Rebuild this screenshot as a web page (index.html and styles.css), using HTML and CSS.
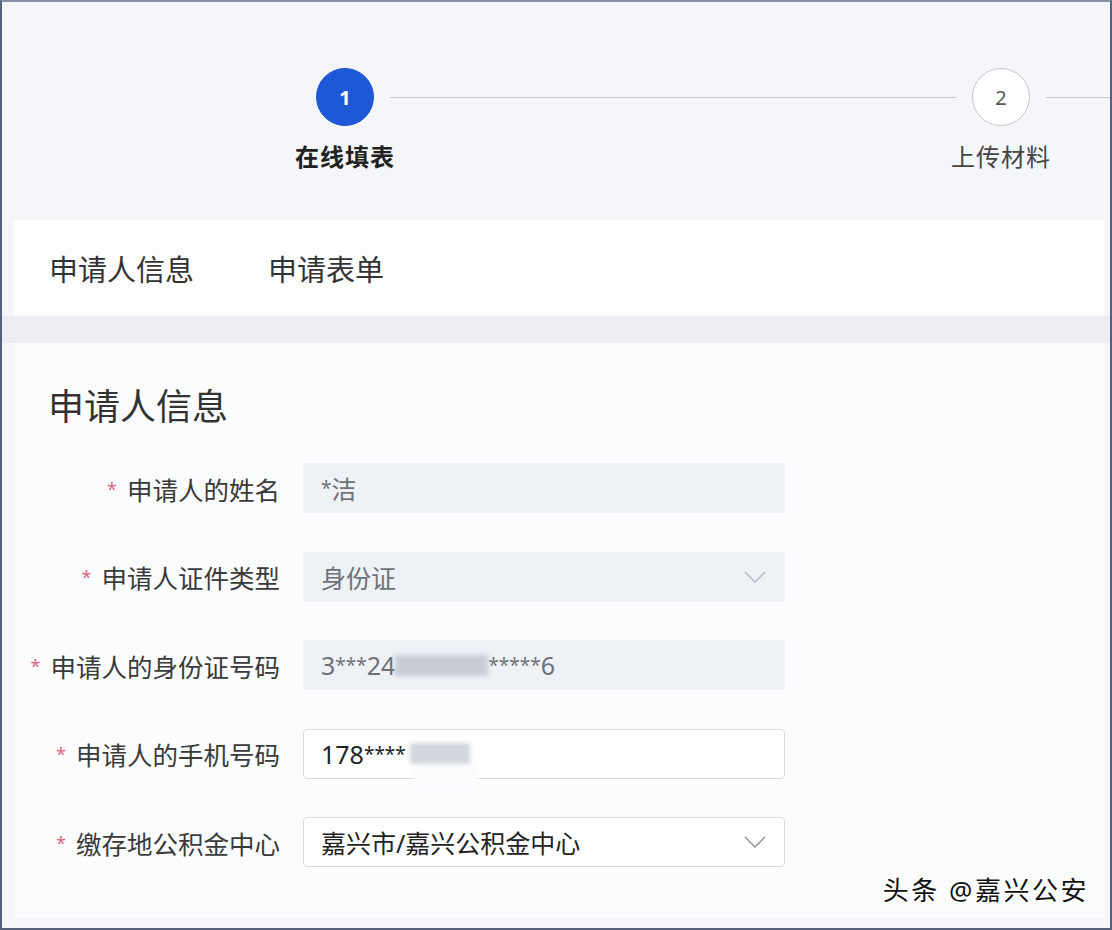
FILE: index.html
```html
<!DOCTYPE html>
<html lang="zh-CN">
<head>
    <meta charset="UTF-8">
    <meta name="viewport" content="width=device-width, initial-scale=1.0">
    <title>在线填表</title>
    <link rel="stylesheet" href="styles.css">
</head>
<body>
    <div class="frame">
        <!-- Steps -->
        <div class="steps">
            <div class="step active">
                <div class="step-circle">1</div>
                <div class="step-label">在线填表</div>
            </div>
            <div class="step-line"></div>
            <div class="step">
                <div class="step-circle">2</div>
                <div class="step-label">上传材料</div>
            </div>
            <div class="step-line tail"></div>
        </div>

        <!-- Tabs -->
        <div class="tabs">
            <span class="tab">申请人信息</span>
            <span class="tab">申请表单</span>
        </div>

        <div class="band"></div>

        <!-- Form -->
        <div class="content">
            <h2 class="section-title">申请人信息</h2>

            <div class="form">
                <div class="form-row">
                    <label class="form-label"><span class="req">*</span>申请人的姓名</label>
                    <div class="field disabled"><span class="star">*</span>洁</div>
                </div>
                <div class="form-row">
                    <label class="form-label"><span class="req">*</span>申请人证件类型</label>
                    <div class="field disabled select">
                        <span>身份证</span>
                        <svg class="chevron" width="22" height="12" viewBox="0 0 22 12"><polyline points="1,1 11,11 21,1" fill="none" stroke="#b4b8c0" stroke-width="1.4"/></svg>
                    </div>
                </div>
                <div class="form-row">
                    <label class="form-label"><span class="req">*</span>申请人的身份证号码</label>
                    <div class="field disabled">3<span class="star">***</span>24<span class="mask mask-id"></span><span class="star">*****</span>6</div>
                </div>
                <div class="form-row">
                    <label class="form-label"><span class="req">*</span>申请人的手机号码</label>
                    <div class="field">178<span class="star">****</span><span class="mask mask-phone"></span></div>
                </div>
                <div class="form-row">
                    <label class="form-label"><span class="req">*</span>缴存地公积金中心</label>
                    <div class="field select">
                        <span>嘉兴市/嘉兴公积金中心</span>
                        <svg class="chevron" width="22" height="12" viewBox="0 0 22 12"><polyline points="1,1 11,11 21,1" fill="none" stroke="#8c9098" stroke-width="1.4"/></svg>
                    </div>
                </div>
            </div>

            <div class="watermark">头条 @嘉兴公安</div>
        </div>
    </div>
</body>
</html>
```

FILE: styles.css
```css
body {
    margin: 0;
    font-family: "Noto Sans", "Noto Sans CJK SC", sans-serif;
    color: #333;
    background: #f4f6fa;
}
.frame {
    width: 1112px;
    height: 930px;
    box-sizing: border-box;
    border: 2px solid #55617a;
    border-top-color: #8a93a3;
    background: #f4f6fa;
    display: flex;
    flex-direction: column;
    overflow: hidden;
}

/* steps */
.steps {
    height: 218px;
    box-sizing: border-box;
    padding: 66px 0 0 298px;
    display: flex;
    align-items: flex-start;
}
.step {
    width: 90px;
    display: flex;
    flex-direction: column;
    align-items: center;
}
.step-circle {
    width: 58px;
    height: 58px;
    box-sizing: border-box;
    border-radius: 50%;
    border: 1px solid #c4c8cf;
    background: #fff;
    color: #555;
    font-size: 20px;
    display: flex;
    align-items: center;
    justify-content: center;
}
.step.active .step-circle {
    background: #1d58d6;
    border-color: #1d58d6;
    color: #fff;
    font-weight: bold;
}
.step-label {
    margin-top: 14px;
    font-size: 24px;
    line-height: 34px;
    white-space: nowrap;
    letter-spacing: 1px;
    color: #444;
}
.step.active .step-label {
    font-weight: bold;
    color: #222;
}
.step-line {
    flex: 1;
    height: 1px;
    margin-top: 29px;
    background: #c6cad2;
}
.step-line.tail {
    flex: none;
    width: 64px;
}

/* tabs */
.tabs {
    height: 96px;
    margin: 0 6px 0 12px;
    padding-left: 35px;
    background: #fdfdfe;
    display: flex;
    align-items: center;
    gap: 74px;
}
.tab {
    font-size: 29px;
    color: #333;
}
.band {
    height: 27px;
    background: #eceef3;
}

/* content */
.content {
    position: relative;
    height: 575px;
    box-sizing: border-box;
    margin: 0 6px 0 12px;
    padding: 42px 0 0 0;
    background: #fbfcfe;
}
.section-title {
    margin: 0 0 34px 34px;
    font-size: 36px;
    line-height: 44px;
    font-weight: normal;
    color: #333;
}
.form {
    display: flex;
    flex-direction: column;
    gap: 38.5px;
}
.form-row {
    display: flex;
    align-items: center;
    gap: 23px;
}
.form-label {
    width: 266px;
    text-align: right;
    font-size: 25.5px;
    color: #3a3a3a;
    white-space: nowrap;
}
.req {
    color: #e0657e;
    font-size: 18px;
    margin-right: 10px;
    vertical-align: 4px;
}
.field {
    width: 482px;
    height: 50px;
    box-sizing: border-box;
    padding: 0 18px 0 17px;
    border: 1px solid #d6dae1;
    border-radius: 4px;
    background: #fff;
    font-size: 25px;
    color: #222;
    display: flex;
    align-items: center;
    white-space: nowrap;
}
.field.disabled {
    border-color: #eef1f6;
    background: #eef1f6;
    color: #6e7177;
}
.field.select {
    justify-content: space-between;
}
.star {
    font-size: 19px;
    align-self: flex-start;
    margin-top: 11px;
}
.mask {
    display: inline-block;
    height: 21px;
    background: #c9cdd5;
    filter: blur(2px);
}
.mask-id {
    width: 93px;
}
.mask-phone {
    width: 60px;
    margin-left: 4px;
    background: #d2d6dd;
    box-shadow: 6px 22px 0 2px #fbfcfe;
}
.watermark {
    position: absolute;
    right: 15px;
    bottom: 10px;
    font-size: 26px;
    letter-spacing: 2.5px;
    color: #111;
    text-shadow: 1px 1px 0 #fff, -1px -1px 0 #fff, 1px -1px 0 #fff, -1px 1px 0 #fff;
}
```
